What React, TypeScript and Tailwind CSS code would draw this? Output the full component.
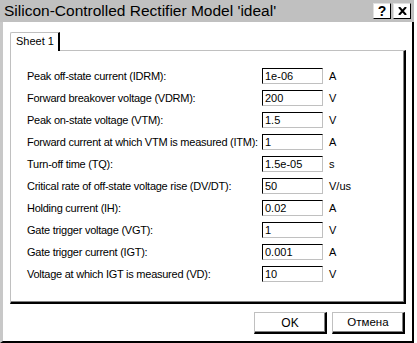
import React from "react";

const rows: [string, string, string][] = [
  ["Peak off-state current (IDRM):", "1e-06", "A"],
  ["Forward breakover voltage (VDRM):", "200", "V"],
  ["Peak on-state voltage (VTM):", "1.5", "V"],
  ["Forward current at which VTM is measured (ITM):", "1", "A"],
  ["Turn-off time (TQ):", "1.5e-05", "s"],
  ["Critical rate of off-state voltage rise (DV/DT):", "50", "V/us"],
  ["Holding current (IH):", "0.02", "A"],
  ["Gate trigger voltage (VGT):", "1", "V"],
  ["Gate trigger current (IGT):", "0.001", "A"],
  ["Voltage at which IGT is measured (VD):", "10", "V"],
];

export default function App() {
  return (
    <div
      className="w-[417px] h-[343px] bg-white overflow-hidden text-black"
      style={{ fontFamily: '"Liberation Sans", Arial, sans-serif' }}
    >
      <div className="w-[414px] h-[343px] flex flex-col">
        {/* Title bar */}
        <div className="h-[22px] bg-[#c0c0c0] flex items-center pl-[4px] pr-[3px] shrink-0">
          <span className="text-[15.5px] leading-none">
            Silicon-Controlled Rectifier Model 'ideal'
          </span>
          <div className="ml-auto flex gap-[2px]">
            <div className="w-[18px] h-[16px] bg-white border-t border-l border-[#e0e0e0] border-r border-b border-r-black border-b-black flex items-center justify-center">
              <span className="text-[14px] font-bold leading-none">?</span>
            </div>
            <div className="w-[18px] h-[16px] bg-white border-t border-l border-[#e0e0e0] border-r border-b border-r-black border-b-black flex items-center justify-center">
              <svg width="9" height="8" viewBox="0 0 9 8">
                <path d="M1 0 L8 8 M8 0 L1 8" stroke="black" strokeWidth="2" />
              </svg>
            </div>
          </div>
        </div>

        {/* Body */}
        <div className="flex-1 flex flex-col border-l-[3px] border-l-[#c8c8c8] border-r-2 border-r-black border-b-2 border-b-black bg-white pl-[7px] pr-[6px] pt-[10px]">
          {/* Tab */}
          <div className="flex h-[18px]">
            <div className="relative z-10 w-[50px] h-[19px] bg-white border-l border-t border-[#c0c0c0] border-r-2 border-r-black rounded-tl-[2px] flex items-start pl-[5px] pt-[3px]">
              <span className="text-[11px] leading-none">Sheet 1</span>
            </div>
          </div>
          {/* Panel */}
          <div className="h-[254px] border-t border-l border-[#c0c0c0] border-r-2 border-b-2 border-r-black border-b-black shadow-[inset_-1px_-1px_0_#808080] pl-[16px] pt-[14px] flex flex-col">
            {rows.map(([label, value, unit]) => (
              <div key={label} className="h-[22px] flex items-center text-[11px] leading-none">
                <span className="w-[235px] shrink-0 whitespace-nowrap tracking-[-0.25px]">{label}</span>
                <div className="w-[61px] h-[16px] bg-white border-t border-l border-black border-r border-b border-r-[#c0c0c0] border-b-[#c0c0c0] flex items-center pl-[2px]">
                  {value}
                </div>
                <span className="ml-[6px]">{unit}</span>
              </div>
            ))}
          </div>
          {/* Buttons */}
          <div className="flex justify-end gap-[5px] mt-[8px] pr-[1px]">
            <div className="w-[73px] h-[22px] bg-white border-t border-l border-[#c0c0c0] border-r-2 border-b-2 border-r-black border-b-black shadow-[inset_-1px_-1px_0_#808080] flex items-center justify-center text-[12px]">
              OK
            </div>
            <div className="w-[73px] h-[22px] bg-white border-t border-l border-[#c0c0c0] border-r-2 border-b-2 border-r-black border-b-black shadow-[inset_-1px_-1px_0_#808080] flex items-center justify-center text-[11.5px]">
              Отмена
            </div>
          </div>
        </div>
      </div>
    </div>
  );
}
